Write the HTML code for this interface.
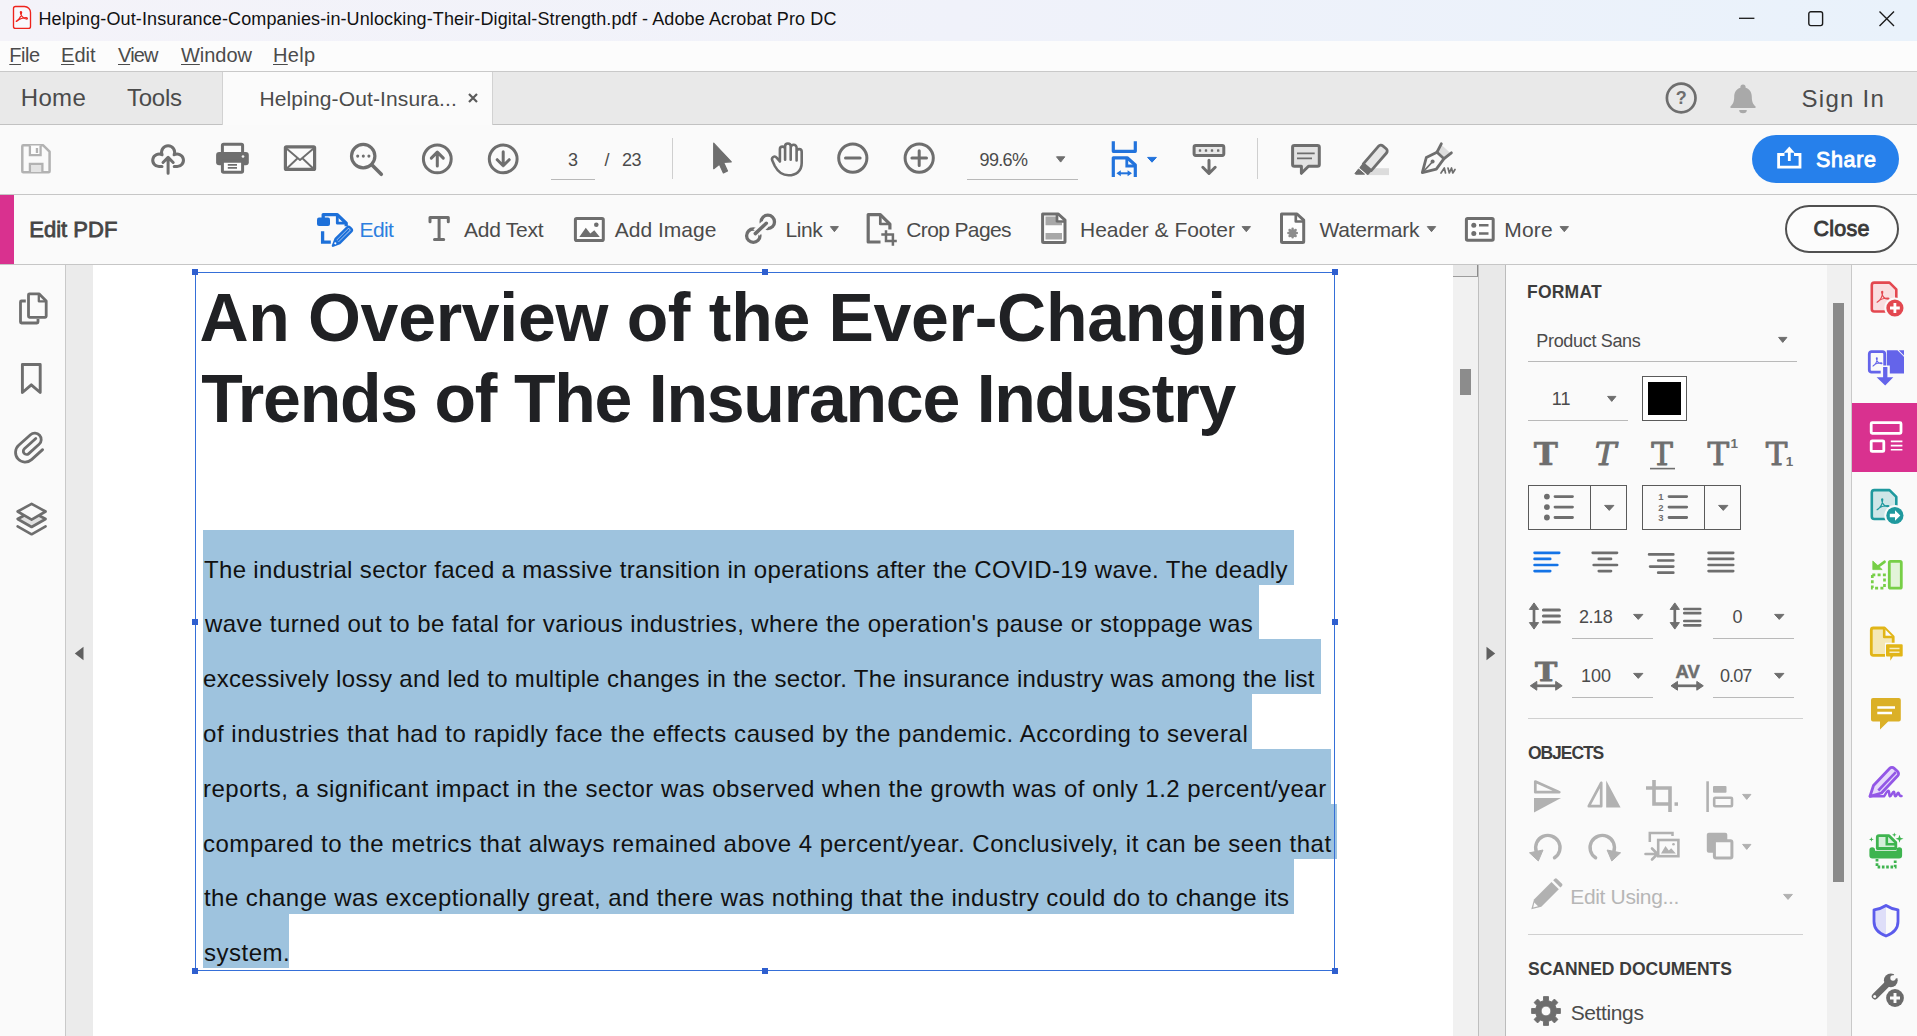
<!DOCTYPE html>
<html lang="en"><head><meta charset="utf-8"><title>Adobe Acrobat Pro DC</title>
<style>
*{box-sizing:border-box;margin:0;padding:0}
html,body{width:1917px;height:1036px;overflow:hidden;background:#fff}
body{font-family:"Liberation Sans",sans-serif;position:relative;color:#4b4b4b}
.t{position:absolute;white-space:pre;display:block}
.t u{text-decoration-thickness:1px;text-underline-offset:1.5px}
.abs,svg.i,.bar,.ln{position:absolute}
svg.i{overflow:visible}
#titlebar{left:0;top:0;width:1917px;height:41px;background:linear-gradient(90deg,#f4f3f9 0%,#f0f2fa 50%,#e9f2fb 100%)}
#menubar{left:0;top:41px;width:1917px;height:31px;background:#fcfcfc}
#tabbar{left:0;top:71px;width:1917px;height:54px;background:#e9e9e9;border-top:1px solid #c9c9c9;border-bottom:1px solid #c2c2c2}
#tab{left:222px;top:72px;width:271px;height:53px;background:#fbfbfb;border-left:1px solid #d2d2d2;border-right:1px solid #d2d2d2}
#toolbar{left:0;top:125px;width:1917px;height:70px;background:#fafafa;border-bottom:1px solid #c6c6c6}
#editbar{left:0;top:195px;width:1917px;height:70px;background:#fafafa;border-bottom:1px solid #c6c6c6}
#pink{left:0;top:195px;width:14px;height:69px;background:#d9318f}
#leftnav{left:0;top:265px;width:66px;height:771px;background:#fafafa;border-right:1px solid #c9c9c9}
#lstrip{left:66px;top:265px;width:27px;height:771px;background:#ebebeb}
#page{left:93px;top:265px;width:1360px;height:771px;background:#fff}
#vscroll{left:1453px;top:265px;width:26px;height:771px;background:#f1f1f1;border-right:1px solid #bfbfbf}
#rstrip{left:1479px;top:265px;width:26px;height:771px;background:#e9e9e9}
#rpanel{left:1505px;top:265px;width:347px;height:771px;background:#fafafa;border-left:1px solid #bcbcbc}
#rscroll{left:1827px;top:265px;width:24px;height:771px;background:#f0f0f0}
#rail{left:1851px;top:265px;width:66px;height:771px;background:#fafafa;border-left:1px solid #c9c9c9}
.hl{position:absolute;background:#9ec3de}
.hd{position:absolute;width:6px;height:6px;background:#2f5fcf}
.ul{position:absolute;height:1px;background:#b9b9b9}
.vsep{position:absolute;width:1px;background:#cfcfcf}
.box{position:absolute;border:1px solid #5a5a5a}
</style></head>
<body>
<div class="bar" id="titlebar">
<svg class="i" style="left:0px;top:0px" width="40" height="40" viewBox="0 0 40 40" ><path d="M15.500,6.500 H24.500 a6,6 0 0 1 6,6 V26.400 a2,2 0 0 1 -2,2 H15.500 a2,2 0 0 1 -2,-2 V8.500 a2,2 0 0 1 2,-2 Z" fill="#f9f8fc" stroke="#ee231c" stroke-width="1.350"/><path d="M16.800,20.800 c2.400,-1.500 4.300,-4.600 4.800,-8.300 c0.100,-1.300 -1.300,-1.300 -1.200,-0.100 c0.400,3.200 2.700,5.900 5.900,6.600 c1.400,0.200 1.400,-1.300 0.100,-1.300 c-3.300,0 -6.900,1.400 -9.300,3.400 c-0.900,0.800 -1.200,0.200 -0.300,-0.300 Z" fill="none" stroke="#ee231c" stroke-width="1.250" stroke-linejoin="round"/></svg>
<span class="t" style="left:38.50px;top:7.00px;font-size:18px;line-height:24px;color:#111;letter-spacing:0.114px;">Helping-Out-Insurance-Companies-in-Unlocking-Their-Digital-Strength.pdf - Adobe Acrobat Pro DC</span>
<svg class="i" style="left:1739px;top:10px" width="16" height="16" viewBox="0 0 16 16" ><path d="M0,8.3 H15.4" stroke="#1a1a1a" stroke-width="1.3" fill="none"/></svg><svg class="i" style="left:1808px;top:10.5px" width="16" height="16" viewBox="0 0 16 16" ><rect x="0.8" y="0.8" width="13.8" height="13.8" rx="2" fill="none" stroke="#1a1a1a" stroke-width="1.4"/></svg><svg class="i" style="left:1879px;top:10.5px" width="16" height="16" viewBox="0 0 16 16" ><path d="M0.5,0.5 L15,15 M15,0.5 L0.5,15" stroke="#1a1a1a" stroke-width="1.4" fill="none"/></svg>
</div>
<div class="bar" id="menubar"></div>
<span class="t" style="left:9.30px;top:42.00px;font-size:20px;line-height:26px;color:#4b4b4b;letter-spacing:-0.471px;"><u>F</u>ile</span>
<span class="t" style="left:61.00px;top:42.00px;font-size:20px;line-height:26px;color:#4b4b4b;letter-spacing:0.027px;"><u>E</u>dit</span>
<span class="t" style="left:118.00px;top:42.00px;font-size:20px;line-height:26px;color:#4b4b4b;letter-spacing:-0.854px;"><u>V</u>iew</span>
<span class="t" style="left:181.00px;top:42.00px;font-size:20px;line-height:26px;color:#4b4b4b;letter-spacing:-0.042px;"><u>W</u>indow</span>
<span class="t" style="left:273.00px;top:42.00px;font-size:20px;line-height:26px;color:#4b4b4b;letter-spacing:0.323px;"><u>H</u>elp</span>
<div class="bar" id="tabbar"></div><div class="bar" id="tab"></div>
<span class="t" style="left:20.80px;top:82.00px;font-size:24px;line-height:31px;color:#4b4b4b;letter-spacing:0.308px;">Home</span>
<span class="t" style="left:127.00px;top:82.00px;font-size:24px;line-height:31px;color:#4b4b4b;letter-spacing:-0.257px;">Tools</span>
<span class="t" style="left:259.50px;top:85.00px;font-size:21px;line-height:27px;color:#4b4b4b;letter-spacing:0.121px;">Helping-Out-Insura...</span>
<svg class="i" style="left:468px;top:93px" width="10" height="10" viewBox="0 0 10 10" ><path d="M1,1 L9,9 M9,1 L1,9" stroke="#5a5a5a" stroke-width="2.2" fill="none"/></svg>
<svg class="i" style="left:1665px;top:81.5px" width="32" height="32" viewBox="0 0 32 32" ><circle cx="16.2" cy="16" r="14.3" fill="none" stroke="#6e6e6e" stroke-width="2.7"/><text x="16.2" y="22.3" text-anchor="middle" font-family="Liberation Sans,sans-serif" font-weight="700" font-size="18" fill="#6e6e6e">?</text></svg><svg class="i" style="left:1729.5px;top:83.5px" width="26" height="30" viewBox="0 0 26 30" ><path d="M13,0.5 a2.6,2.6 0 0 1 2.6,2.6 v0.6 c4,1.2 6.2,4.700 6.2,9 c0,5.400 1.6,7.800 3.700,9.600 v1.700 H0.5 v-1.700 c2.1,-1.8 3.700,-4.200 3.700,-9.600 c0,-4.300 2.2,-7.800 6.200,-9 v-0.600 a2.600,2.600 0 0 1 2.600,-2.600 Z" fill="#a9a9a9"/><path d="M9.200,26 h7.600 a3.800,3.300 0 0 1 -7.600,0 Z" fill="#a9a9a9"/></svg>
<span class="t" style="left:1801.50px;top:83.00px;font-size:24px;line-height:31px;color:#4b4b4b;letter-spacing:1.269px;">Sign In</span>
<div class="bar" id="toolbar"></div>
<svg class="i" style="left:0;top:0" width="1917" height="1036" viewBox="0 0 1917 1036"><path d="M23.300,145.300 H43.200 L49.600,151.700 V171.300 a1,1 0 0 1 -1,1 H23.300 a1,1 0 0 1 -1,-1 V146.300 a1,1 0 0 1 1,-1 Z" fill="none" stroke="#b2b2b2" stroke-width="2.5" stroke-linecap="round" stroke-linejoin="round"/><path d="M29.900,145.500 V155.200 H40.600 V145.500" fill="#fdfdfd" stroke="#b2b2b2" stroke-width="2.3" stroke-linejoin="miter"/><rect x="35.8" y="148" width="2.3" height="5" rx="0" fill="#b2b2b2"/><path d="M29.900,172 V163.900 H42.400 V172" fill="#e3e3e3" stroke="#b2b2b2" stroke-width="2.3" stroke-linejoin="miter"/><path d="M162,166.600 H159.300 A6.300,6.300 0 1 1 162.100,154.800 A6.500,6.500 0 1 1 174.100,154.800 A6.300,6.300 0 1 1 176.900,166.600 H174.200" fill="none" stroke="#6e6e6e" stroke-width="3" stroke-linecap="round" stroke-linejoin="round"/><path d="M168.100,173.200 V157.600 M163,162.500 L168.100,157.400 L173.200,162.500" fill="none" stroke="#6e6e6e" stroke-width="3" stroke-linecap="round" stroke-linejoin="round"/><rect x="222.4" y="144.2" width="20.2" height="10" rx="1.2" fill="#fafafa" stroke="#6e6e6e" stroke-width="3"/><rect x="216.1" y="152" width="32.7" height="13.3" rx="3" fill="#6e6e6e"/><rect x="222.4" y="161.3" width="20.2" height="10.9" rx="1.2" fill="#fdfdfd" stroke="#6e6e6e" stroke-width="3"/><path d="M227.800,164.800 H237 M227.800,167.900 H237" fill="none" stroke="#6e6e6e" stroke-width="1.7" /><circle cx="243" cy="156.5" r="1.35" fill="#f4f4f4"/><rect x="285.4" y="146.8" width="29.2" height="22.6" rx="1" fill="none" stroke="#6e6e6e" stroke-width="3.2"/><path d="M286.800,148.800 L300,160 L313.200,148.800 M286.800,168.500 L296.800,159 M313.200,168.500 L303.200,159" fill="none" stroke="#6e6e6e" stroke-width="1.9" stroke-linecap="round" stroke-linejoin="round"/><circle cx="363.2" cy="156.1" r="11.7" fill="none" stroke="#6e6e6e" stroke-width="3.2"/><path d="M371.800,164.800 L381.300,174.300" fill="none" stroke="#6e6e6e" stroke-width="3.6" stroke-linecap="round" stroke-linejoin="round"/><circle cx="357.7" cy="156.1" r="1.55" fill="#6e6e6e"/><circle cx="363.3" cy="156.1" r="1.55" fill="#6e6e6e"/><circle cx="368.9" cy="156.1" r="1.55" fill="#6e6e6e"/><circle cx="437.3" cy="158.9" r="13.9" fill="none" stroke="#6e6e6e" stroke-width="3"/><path d="M437.3,166.1 V152.4 M431.3,158.1 L437.3,152.1 L443.3,158.1" fill="none" stroke="#6e6e6e" stroke-width="3" stroke-linecap="round" stroke-linejoin="round"/><circle cx="503.2" cy="158.9" r="13.9" fill="none" stroke="#6e6e6e" stroke-width="3"/><path d="M503.2,151.7 V165.4 M497.2,159.7 L503.2,165.7 L509.2,159.7" fill="none" stroke="#6e6e6e" stroke-width="3" stroke-linecap="round" stroke-linejoin="round"/><path d="M713.700,143.200 V168.700 L719.400,164.200 L723.400,172.900 L727.500,171 L723.500,162.300 L731.300,161.800 Z" fill="#6e6e6e" stroke="#6e6e6e" stroke-width="1.200" stroke-linejoin="round"/><path d="M779.900,161.500 V149.200 a2.600,2.600 0 0 1 5.200,0 V159.700 M785.100,159.700 V146.300 a2.800,2.800 0 0 1 5.600,0 V159.700 M790.700,159.700 V147.750 a2.950,2.950 0 0 1 5.900,0 V159.700 M796.600,160.500 V151.650 a2.550,2.550 0 0 1 5.100,0 V163 C801.700,171 796,175.300 788.500,175.300 C781,175.300 777.500,171 774.800,166 L772.300,160.500 C771,157.500 774.500,155 776.800,157.800 L779.900,161.500" fill="none" stroke="#6e6e6e" stroke-width="2.6" stroke-linecap="round" stroke-linejoin="round"/><circle cx="852.8" cy="158.1" r="14.1" fill="none" stroke="#6e6e6e" stroke-width="3"/><path d="M845.500,158.100 H860.100" fill="none" stroke="#6e6e6e" stroke-width="3" stroke-linecap="round" stroke-linejoin="round"/><circle cx="919.2" cy="158.1" r="14.1" fill="none" stroke="#6e6e6e" stroke-width="3"/><path d="M911.900,158.100 H926.500 M919.200,150.800 V165.400" fill="none" stroke="#6e6e6e" stroke-width="3" stroke-linecap="round" stroke-linejoin="round"/><path d="M1056.5,156.8 H1064.8 L1060.65,162.1 Z" fill="#6e6e6e" stroke="#6e6e6e" stroke-width="1" stroke-linejoin="round"/><path d="M1113.300,141.200 V151.300 H1135.300 V141.200" fill="none" stroke="#2273dc" stroke-width="3.2" stroke-linejoin="round"/><path d="M1113.300,177 V157.800 H1127.200 L1135.300,165 V177" fill="none" stroke="#2273dc" stroke-width="3.2" stroke-linejoin="round"/><path d="M1126.800,158.500 V166 H1134.800" fill="none" stroke="#2273dc" stroke-width="2.8" /><path d="M1119.500,173.300 H1129" fill="none" stroke="#2273dc" stroke-width="2" /><path d="M1116.400,173.300 L1120.800,170.300 V176.300 Z M1132,173.300 L1127.600,170.300 V176.300 Z" fill="#2273dc"/><path d="M1147.6,157.4 H1156.4 L1152,162.2 Z" fill="#2273dc" stroke="#2273dc" stroke-width="1" stroke-linejoin="round"/><rect x="1194.1" y="145.6" width="29.7" height="9.8" rx="1.6" fill="#e9e9e9" stroke="#6e6e6e" stroke-width="3"/><rect x="1198.8" y="149.3" width="2.4" height="2.5" rx="0.6" fill="#6e6e6e"/><rect x="1204.8" y="149.3" width="2.4" height="2.5" rx="0.6" fill="#6e6e6e"/><rect x="1210.8" y="149.3" width="2.4" height="2.5" rx="0.6" fill="#6e6e6e"/><rect x="1217" y="149.3" width="2.4" height="2.5" rx="0.6" fill="#6e6e6e"/><path d="M1209,160.300 V173 M1202.800,167.300 L1209,173.500 L1215.200,167.300" fill="none" stroke="#6e6e6e" stroke-width="3" stroke-linecap="round" stroke-linejoin="round"/><path d="M1294.400,145.400 H1317.500 a1.800,1.800 0 0 1 1.800,1.800 V164.400 a1.800,1.800 0 0 1 -1.800,1.800 H1308.500 L1301.400,173.300 V166.200 H1294.400 a1.800,1.800 0 0 1 -1.800,-1.800 V147.200 a1.800,1.800 0 0 1 1.800,-1.800 Z" fill="#e3e3e3" stroke="#6e6e6e" stroke-width="3" stroke-linecap="round" stroke-linejoin="round"/><path d="M1297,153.300 H1314.700 M1297,158.300 H1312" fill="none" stroke="#6e6e6e" stroke-width="1.7" /><rect x="1366.2" y="168.2" width="22.8" height="6.9" rx="0" fill="#dcdcdc"/><path d="M1363.300,163.800 L1378.600,146.200 a3,3 0 0 1 4.200,-0.300 L1386.200,148.800 a3,3 0 0 1 0.300,4.200 L1371.200,170.600 Z" fill="#e6e6e6" stroke="#6e6e6e" stroke-width="2.8" stroke-linecap="round" stroke-linejoin="round"/><path d="M1363.300,163.800 L1371.200,170.600 L1367.800,174.300 L1360.200,167.700 Z" fill="#6e6e6e" stroke="#6e6e6e" stroke-width="1.500" stroke-linejoin="round"/><path d="M1358.500,169 L1364.500,174.200 H1355.800 a0.700,0.700 0 0 1 -0.500,-1.200 Z" fill="#6e6e6e" stroke="#6e6e6e" stroke-width="1" stroke-linejoin="round"/><path d="M1441.500,145 L1451,153.500 L1446,159 L1437.500,151.500 Z" fill="#dddddd"/><path d="M1441.300,143.800 L1437,152.200 M1451.400,152.800 L1444,158.700" fill="none" stroke="#6e6e6e" stroke-width="2.8" stroke-linecap="round" stroke-linejoin="round"/><path d="M1437,152.200 L1426.300,157.500 L1422.300,172.600 L1436.300,169.200 L1444,158.700 Z" fill="none" stroke="#6e6e6e" stroke-width="2.8" stroke-linecap="round" stroke-linejoin="round"/><path d="M1423,172 L1431.800,162.500" fill="none" stroke="#6e6e6e" stroke-width="1.8" stroke-linecap="round" stroke-linejoin="round"/><circle cx="1432.6" cy="161.6" r="2" fill="#6e6e6e"/><path d="M1441,173 L1444.300,168 L1445.500,173 M1448,168 L1449.300,173 L1451.500,168 L1452.800,173 L1455,169.500" fill="none" stroke="#6e6e6e" stroke-width="1.7" stroke-linecap="round" stroke-linejoin="round"/></svg>
<span class="t" style="left:568.00px;top:148.00px;font-size:18px;line-height:24px;color:#4b4b4b;">3</span>
<div class="ul" style="left:551px;top:179px;width:44px"></div>
<span class="t" style="left:604.50px;top:148.00px;font-size:18px;line-height:24px;color:#4b4b4b;">/</span>
<span class="t" style="left:622.00px;top:148.00px;font-size:18px;line-height:24px;color:#4b4b4b;letter-spacing:-0.511px;">23</span>
<div class="vsep" style="left:672px;top:138px;height:41px"></div>
<span class="t" style="left:979.50px;top:148.00px;font-size:18px;line-height:24px;color:#4b4b4b;letter-spacing:-0.635px;">99.6%</span>
<div class="ul" style="left:967px;top:179px;width:111px"></div>
<div class="vsep" style="left:1257px;top:138px;height:41px"></div>
<div class="abs" style="left:1752px;top:135px;width:147px;height:48px;border-radius:24px;background:#2680eb"></div>
<svg class="i" style="left:1777px;top:145.5px" width="25" height="23" viewBox="0 0 25 23" ><path d="M7.500,8.500 H1.600 V21.200 H23 V8.500 H17" fill="none" stroke="#fff" stroke-width="2.800"/><path d="M12.300,15 V3" fill="none" stroke="#fff" stroke-width="2.800"/><path d="M6.800,6.800 L12.300,0.600 L17.800,6.800 Z" fill="#fff"/></svg>
<span class="t" style="left:1816.00px;top:146.00px;font-size:21.5px;line-height:28px;color:#fff;letter-spacing:0.643px;-webkit-text-stroke:0.9px #fff;">Share</span>
<div class="bar" id="editbar"></div><div class="bar" id="pink"></div>
<span class="t" style="left:29.20px;top:215.00px;font-size:22px;line-height:29px;color:#454545;letter-spacing:0.030px;-webkit-text-stroke:0.8px #454545;">Edit PDF</span>
<svg class="i" style="left:0;top:0" width="1917" height="1036" viewBox="0 0 1917 1036"><path d="M323.200,218 V214.600 H337.300 L346.200,223.200 V226.300" fill="none" stroke="#1d70d9" stroke-width="3.3" stroke-linejoin="round"/><path d="M337.300,214.800 V223.200 H346" fill="none" stroke="#1d70d9" stroke-width="2.8" stroke-linejoin="round"/><rect x="317" y="217.5" width="13" height="8.5" rx="2" fill="#1d70d9"/><path d="M322.600,231.300 V242.100 H330.800" fill="none" stroke="#1d70d9" stroke-width="3.3" /><path d="M335.600,239 L347.300,227.300 a1.800,1.800 0 0 1 2.500,0 L351.300,228.800 a1.800,1.800 0 0 1 0,2.500 L339.600,243 L333,245.700 Z" fill="#eef1fb" stroke="#1d70d9" stroke-width="2.5" stroke-linejoin="round"/><path d="M337.600,241 L349.300,229.300" fill="none" stroke="#1d70d9" stroke-width="2.3" /><path d="M335.600,239 L339.600,243 L332.800,245.900 Z" fill="#1d70d9"/><circle cx="335.3" cy="243.3" r="1.1" fill="#fff"/><path d="M430,221.800 V217.400 H448.300 V221.800 M439.100,217.400 V239.600 M434.500,239.600 H443.700" fill="none" stroke="#6e6e6e" stroke-width="3" stroke-linecap="round" stroke-linejoin="round"/><rect x="575.4" y="218.5" width="27.9" height="22" rx="1.3" fill="#fdfdfd" stroke="#6e6e6e" stroke-width="3"/><path d="M579.300,237 L585.800,227.800 L590.300,233.600 L594.300,230.300 L599.800,237 Z" fill="#6e6e6e"/><circle cx="596.3" cy="224.7" r="2.3" fill="#6e6e6e"/><circle cx="767.8" cy="221.9" r="6.7" fill="none" stroke="#6e6e6e" stroke-width="3.3"/><circle cx="753.3" cy="235.7" r="6.7" fill="none" stroke="#6e6e6e" stroke-width="3.3"/><path d="M756.300,232.700 L765.300,224.200" fill="none" stroke="#fafafa" stroke-width="8.5" stroke-linecap="butt"/><path d="M755.300,233.600 L766.300,223.300" fill="none" stroke="#6e6e6e" stroke-width="3.5" stroke-linecap="round"/><path d="M830.4,226.6 H838.4 L834.4,231.7 Z" fill="#6e6e6e" stroke="#6e6e6e" stroke-width="1" stroke-linejoin="round"/><path d="M880.500,242 H868.200 V214.600 H880.300 L889.900,224.200 V229.500" fill="none" stroke="#6e6e6e" stroke-width="3.2" stroke-linejoin="round"/><path d="M880.300,214.900 V224 H889.600" fill="none" stroke="#6e6e6e" stroke-width="2.7" stroke-linejoin="round"/><path d="M886,230.300 V241 H896.800 M881.300,234.600 H892.900 V245.800" fill="none" stroke="#6e6e6e" stroke-width="2.5" /><path d="M1042.600,214 H1058.300 L1065,220.200 V241.400 a1,1 0 0 1 -1,1 H1043.600 a1,1 0 0 1 -1,-1 Z" fill="#fdfdfd" stroke="#6e6e6e" stroke-width="3" stroke-linejoin="round"/><path d="M1045.500,216.600 H1056 V222.500 H1062 V225.300 H1045.500 Z M1045.500,233 H1062 V239.500 H1045.500 Z" fill="#a8a8a8"/><path d="M1057,214.500 V221.500 H1064.500" fill="none" stroke="#6e6e6e" stroke-width="2.7" stroke-linejoin="round"/><path d="M1242.1,226.6 H1250.5 L1246.3,231.7 Z" fill="#6e6e6e" stroke="#6e6e6e" stroke-width="1" stroke-linejoin="round"/><path d="M1281.500,214 H1297 L1303.700,220.200 V241.400 a1,1 0 0 1 -1,1 H1282.500 a1,1 0 0 1 -1,-1 Z" fill="#fdfdfd" stroke="#6e6e6e" stroke-width="3" stroke-linejoin="round"/><path d="M1295.800,214.500 V221.500 H1303.300" fill="none" stroke="#6e6e6e" stroke-width="2.7" stroke-linejoin="round"/><path d="M1292.600,228.800 V237.200 M1288.400,233 H1296.800 M1289.600,230 L1295.600,236 M1295.600,230 L1289.600,236" fill="none" stroke="#8c8c8c" stroke-width="2.5" stroke-linecap="round" stroke-linejoin="round"/><path d="M1427.3,226.6 H1435.7 L1431.5,231.7 Z" fill="#6e6e6e" stroke="#6e6e6e" stroke-width="1" stroke-linejoin="round"/><rect x="1466.4" y="218.4" width="26.8" height="21.9" rx="1.2" fill="#fdfdfd" stroke="#6e6e6e" stroke-width="3"/><circle cx="1473.8" cy="225.3" r="2.5" fill="#6e6e6e"/><circle cx="1473.8" cy="233.5" r="2.5" fill="#6e6e6e"/><path d="M1479,225.300 H1488.500 M1479,233.500 H1488.500" fill="none" stroke="#6e6e6e" stroke-width="2.5" /><path d="M1560.1,226.6 H1568.5 L1564.3,231.7 Z" fill="#6e6e6e" stroke="#6e6e6e" stroke-width="1" stroke-linejoin="round"/></svg>
<span class="t" style="left:359.50px;top:216.00px;font-size:21px;line-height:27px;color:#2d7fdf;letter-spacing:-0.618px;">Edit</span>
<span class="t" style="left:464.00px;top:216.00px;font-size:21px;line-height:27px;color:#4b4b4b;letter-spacing:-0.244px;">Add Text</span>
<span class="t" style="left:614.80px;top:216.00px;font-size:21px;line-height:27px;color:#4b4b4b;">Add Image</span>
<span class="t" style="left:785.60px;top:216.00px;font-size:21px;line-height:27px;color:#4b4b4b;letter-spacing:-0.474px;">Link</span>
<span class="t" style="left:906.30px;top:216.00px;font-size:21px;line-height:27px;color:#4b4b4b;letter-spacing:-0.634px;">Crop Pages</span>
<span class="t" style="left:1080.00px;top:216.00px;font-size:21px;line-height:27px;color:#4b4b4b;letter-spacing:-0.018px;">Header &amp; Footer</span>
<span class="t" style="left:1319.50px;top:216.00px;font-size:21px;line-height:27px;color:#4b4b4b;letter-spacing:-0.237px;">Watermark</span>
<span class="t" style="left:1504.20px;top:216.00px;font-size:21px;line-height:27px;color:#4b4b4b;letter-spacing:0.207px;">More</span>
<div class="abs" style="left:1785px;top:205px;width:114px;height:48px;border-radius:24px;border:2px solid #505050;background:#fcfcfc"></div>
<span class="t" style="left:1813.50px;top:215.00px;font-size:21.5px;line-height:28px;color:#3a3a3a;letter-spacing:0.244px;-webkit-text-stroke:0.9px #3a3a3a;">Close</span>
<div class="bar" id="leftnav"></div><div class="bar" id="lstrip"></div>
<svg class="i" style="left:0;top:0" width="1917" height="1036" viewBox="0 0 1917 1036"><path d="M25.800,301 H21.500 a1,1 0 0 0 -1,1 V322 a1,1 0 0 0 1,1 H37 a1,1 0 0 0 1,-1 V319" fill="none" stroke="#6e6e6e" stroke-width="2.8" stroke-linejoin="round"/><path d="M29.500,293.800 H39 L46.200,301 V316.300 a1,1 0 0 1 -1,1 H29.500 a1,1 0 0 1 -1,-1 V294.800 a1,1 0 0 1 1,-1 Z" fill="#fafafa" stroke="#6e6e6e" stroke-width="2.8" stroke-linejoin="round"/><path d="M38.800,294.300 V301.300 H45.800" fill="none" stroke="#6e6e6e" stroke-width="2.3" stroke-linejoin="round"/><path d="M22.400,364.500 H40.200 V392.500 L31.300,384.800 L22.400,392.500 Z" fill="none" stroke="#6e6e6e" stroke-width="2.9" stroke-linejoin="round"/><g transform="translate(31.200 447) rotate(-42) scale(0.96)"><path d="M9.500,-3.400 H-6.500 a3.400,3.400 0 0 0 0,6.800 H8 a6.700,6.700 0 0 0 0,-13.400 H-8.500 a10,10 0 0 0 0,20 H7" fill="none" stroke="#6e6e6e" stroke-width="2.9" stroke-linecap="round" stroke-linejoin="round"/></g><path d="M17.600,526.300 L31.600,534.300 L45.600,526.300" fill="none" stroke="#6e6e6e" stroke-width="2.6" stroke-linejoin="round" stroke-linecap="round"/><path d="M17.600,519 L31.600,527 L45.600,519 L31.600,511.500 Z" fill="#e1e1e1" stroke="#6e6e6e" stroke-width="2.6" stroke-linejoin="round" stroke-linecap="round"/><path d="M31.600,503.800 L45.600,511.500 L31.600,519.600 L17.600,511.500 Z" fill="#fafafa" stroke="#6e6e6e" stroke-width="2.6" stroke-linejoin="round"/></svg>
<div class="bar" id="page"></div>
<div class="hl" style="left:202.8px;top:529.8px;width:1091.2px;height:55.0px"></div>
<div class="hl" style="left:202.8px;top:584.6px;width:1056.2px;height:55.0px"></div>
<div class="hl" style="left:202.8px;top:639.4px;width:1118.2px;height:55.0px"></div>
<div class="hl" style="left:202.8px;top:694.2px;width:1049.7px;height:55.0px"></div>
<div class="hl" style="left:202.8px;top:749.0px;width:1128.7px;height:55.0px"></div>
<div class="hl" style="left:202.8px;top:803.8px;width:1134.2px;height:55.0px"></div>
<div class="hl" style="left:202.8px;top:858.6px;width:1091.2px;height:55.0px"></div>
<div class="hl" style="left:202.8px;top:913.4px;width:86.2px;height:54.8px"></div>
<span class="t" style="left:199.40px;top:277.00px;font-size:68px;line-height:80px;color:#202124;font-weight:700;letter-spacing:-0.300px;">An Overview of the Ever-Changing</span>
<span class="t" style="left:201.30px;top:358.00px;font-size:68px;line-height:80px;color:#202124;font-weight:700;letter-spacing:-1.229px;">Trends of The Insurance Industry</span>
<span class="t" style="left:204.00px;top:554.00px;font-size:24px;line-height:31px;color:#111;letter-spacing:0.337px;">The industrial sector faced a massive transition in operations after the COVID-19 wave. The deadly</span>
<span class="t" style="left:205.00px;top:608.00px;font-size:24px;line-height:31px;color:#111;letter-spacing:0.424px;">wave turned out to be fatal for various industries, where the operation's pause or stoppage was</span>
<span class="t" style="left:203.00px;top:663.00px;font-size:24px;line-height:31px;color:#111;letter-spacing:0.311px;">excessively lossy and led to multiple changes in the sector. The insurance industry was among the list</span>
<span class="t" style="left:203.00px;top:718.00px;font-size:24px;line-height:31px;color:#111;letter-spacing:0.560px;">of industries that had to rapidly face the effects caused by the pandemic. According to several</span>
<span class="t" style="left:203.00px;top:773.00px;font-size:24px;line-height:31px;color:#111;letter-spacing:0.493px;">reports, a significant impact in the sector was observed when the growth was of only 1.2 percent/year</span>
<span class="t" style="left:203.00px;top:828.00px;font-size:24px;line-height:31px;color:#111;letter-spacing:0.512px;">compared to the metrics that always remained above 4 percent/year. Conclusively, it can be seen that</span>
<span class="t" style="left:204.00px;top:882.00px;font-size:24px;line-height:31px;color:#111;letter-spacing:0.444px;">the change was exceptionally great, and there was nothing that the industry could do to change its</span>
<span class="t" style="left:204.00px;top:937.00px;font-size:24px;line-height:31px;color:#111;letter-spacing:0.497px;">system.</span>
<div class="abs" style="left:195px;top:272px;width:1140px;height:699px;border:1px solid #356fd8"></div>
<div class="hd" style="left:192.0px;top:269.0px"></div>
<div class="hd" style="left:762.0px;top:269.0px"></div>
<div class="hd" style="left:1332.0px;top:269.0px"></div>
<div class="hd" style="left:192.0px;top:618.5px"></div>
<div class="hd" style="left:1332.0px;top:618.5px"></div>
<div class="hd" style="left:192.0px;top:968.0px"></div>
<div class="hd" style="left:762.0px;top:968.0px"></div>
<div class="hd" style="left:1332.0px;top:968.0px"></div>
<div class="bar" id="vscroll"></div>
<div class="abs" style="left:1453px;top:265px;width:25px;height:12px;background:#e8e8e8;border-bottom:1px solid #9c9c9c;border-right:1px solid #8c8c8c"></div>
<div class="abs" style="left:1460px;top:368.5px;width:11px;height:26.5px;background:#8c8c8c"></div>
<div class="bar" id="rstrip"></div>
<svg class="i" style="left:74px;top:645.5px" width="10" height="15" viewBox="0 0 10 15" ><path d="M9.500,0.800 V14.200 L0.800,7.500 Z" fill="#5f5f5f"/></svg><svg class="i" style="left:1486px;top:645.5px" width="10" height="15" viewBox="0 0 10 15" ><path d="M0.500,0.800 V14.200 L9.200,7.500 Z" fill="#5f5f5f"/></svg>
<div class="bar" id="rpanel"></div>
<span class="t" style="left:1527.00px;top:280.00px;font-size:17.5px;line-height:24px;color:#3c3c3c;font-weight:700;letter-spacing:0.227px;">FORMAT</span>
<span class="t" style="left:1536.30px;top:329.00px;font-size:18px;line-height:24px;color:#4b4b4b;letter-spacing:-0.324px;">Product Sans</span>
<div class="ul" style="left:1528px;top:361px;width:269px"></div>
<span class="t" style="left:1551.80px;top:387.00px;font-size:18px;line-height:24px;color:#4b4b4b;letter-spacing:0.014px;">11</span>
<div class="ul" style="left:1528px;top:420px;width:100px"></div>
<div class="box" style="left:1642px;top:376px;width:45px;height:45px;background:#fff"></div>
<div class="abs" style="left:1648px;top:382px;width:33px;height:33px;background:#000"></div>
<div class="box" style="left:1528px;top:485px;width:99px;height:45px"></div><div class="vsep" style="left:1590px;top:485px;height:45px;background:#5a5a5a"></div>
<div class="box" style="left:1642px;top:485px;width:99px;height:45px"></div><div class="vsep" style="left:1704px;top:485px;height:45px;background:#5a5a5a"></div>
<span class="t" style="left:1579.00px;top:605.00px;font-size:18px;line-height:24px;color:#4b4b4b;letter-spacing:-0.444px;">2.18</span>
<div class="ul" style="left:1572px;top:638px;width:81px"></div>
<span class="t" style="left:1732.40px;top:605.00px;font-size:18px;line-height:24px;color:#4b4b4b;">0</span>
<div class="ul" style="left:1712.5px;top:638px;width:81px"></div>
<span class="t" style="left:1581.00px;top:664.00px;font-size:18px;line-height:24px;color:#4b4b4b;letter-spacing:-0.011px;">100</span>
<div class="ul" style="left:1572px;top:697px;width:81px"></div>
<span class="t" style="left:1720.00px;top:664.00px;font-size:18px;line-height:24px;color:#4b4b4b;letter-spacing:-0.910px;">0.07</span>
<div class="ul" style="left:1712.5px;top:697px;width:81px"></div>
<div class="ul" style="left:1528px;top:718px;width:275px;background:#d0d0d0"></div>
<span class="t" style="left:1528.00px;top:741.00px;font-size:17.5px;line-height:24px;color:#3c3c3c;font-weight:700;letter-spacing:-1.065px;">OBJECTS</span>
<span class="t" style="left:1570.30px;top:883.00px;font-size:21px;line-height:27px;color:#b6b6b6;letter-spacing:-0.349px;">Edit Using...</span>
<div class="ul" style="left:1528px;top:934px;width:275px;background:#d0d0d0"></div>
<span class="t" style="left:1528.00px;top:957.00px;font-size:17.5px;line-height:24px;color:#3c3c3c;font-weight:700;letter-spacing:-0.013px;">SCANNED DOCUMENTS</span>
<span class="t" style="left:1570.70px;top:999.00px;font-size:21px;line-height:27px;color:#4b4b4b;letter-spacing:-0.384px;">Settings</span>
<svg class="i" style="left:0;top:0" width="1917" height="1036" viewBox="0 0 1917 1036"><text x="1545.9" y="464.5" font-family="DejaVu Serif,Liberation Serif,serif" font-size="32.5" font-weight="700" fill="#6e6e6e" text-anchor="middle" stroke="#6e6e6e" stroke-width="0.5" stroke-linejoin="round">T</text><text x="1605.5" y="464.5" font-family="DejaVu Serif,Liberation Serif,serif" font-size="32.5" font-weight="400" fill="#6e6e6e" text-anchor="middle" font-style="italic" stroke="#6e6e6e" stroke-width="0.9" stroke-linejoin="round">T</text><text x="1662" y="464.5" font-family="DejaVu Serif,Liberation Serif,serif" font-size="32.5" font-weight="400" fill="#6e6e6e" text-anchor="middle" stroke="#6e6e6e" stroke-width="0.9" stroke-linejoin="round">T</text><path d="M1650,468.600 H1675" stroke="#6e6e6e" stroke-width="1.600"/><text x="1718.3" y="464.5" font-family="DejaVu Serif,Liberation Serif,serif" font-size="32.5" font-weight="400" fill="#6e6e6e" text-anchor="middle" stroke="#6e6e6e" stroke-width="0.9" stroke-linejoin="round">T</text><text x="1734.2" y="448.3" font-family="Liberation Sans,sans-serif" font-size="13.5" font-weight="700" fill="#6e6e6e" text-anchor="middle">1</text><text x="1776.7" y="464.5" font-family="DejaVu Serif,Liberation Serif,serif" font-size="32.5" font-weight="400" fill="#6e6e6e" text-anchor="middle" stroke="#6e6e6e" stroke-width="0.9" stroke-linejoin="round">T</text><text x="1789.4" y="466.3" font-family="Liberation Sans,sans-serif" font-size="13.5" font-weight="700" fill="#6e6e6e" text-anchor="middle">1</text><circle cx="1546.900" cy="496.600" r="2.900" fill="#6e6e6e"/><circle cx="1546.900" cy="507.100" r="2.900" fill="#6e6e6e"/><circle cx="1546.900" cy="517.500" r="2.900" fill="#6e6e6e"/><path d="M1555,496.6 H1572.5 M1555,507.1 H1572.5 M1555,517.5 H1572.5" stroke="#6e6e6e" stroke-width="2.8" stroke-linecap="round" fill="none"/><text x="1660.8" y="500.2" font-family="Liberation Sans,sans-serif" font-size="9.5" font-weight="700" fill="#6e6e6e" text-anchor="middle">1</text><text x="1660.8" y="510.7" font-family="Liberation Sans,sans-serif" font-size="9.5" font-weight="700" fill="#6e6e6e" text-anchor="middle">2</text><text x="1660.8" y="521.1" font-family="Liberation Sans,sans-serif" font-size="9.5" font-weight="700" fill="#6e6e6e" text-anchor="middle">3</text><path d="M1669,496.6 H1686.7 M1669,507.1 H1686.7 M1669,517.5 H1686.7" stroke="#6e6e6e" stroke-width="2.8" stroke-linecap="round" fill="none"/><path d="M1534.6,552.8 H1559.2 M1534.6,558.9 H1550.2 M1534.6,565 H1557.3 M1534.6,571.1 H1550.2" stroke="#1473e6" stroke-width="2.7" stroke-linecap="round" fill="none"/><path d="M1592.7,552.8 H1617 M1598.8,558.9 H1611 M1593.7,565 H1617 M1598.8,571.1 H1611" stroke="#6e6e6e" stroke-width="2.7" stroke-linecap="round" fill="none"/><path d="M1649.1,554.4 H1673.3 M1658.2,560.5 H1673.3 M1650.1,566.6 H1673.3 M1658.2,572.7 H1673.3" stroke="#6e6e6e" stroke-width="2.7" stroke-linecap="round" fill="none"/><path d="M1708.6,552.8 H1733.2 M1708.6,558.9 H1733.2 M1708.6,565 H1733.2 M1708.6,571.1 H1733.2" stroke="#6e6e6e" stroke-width="2.7" stroke-linecap="round" fill="none"/><path d="M1534,606.4 V625.6" stroke="#6e6e6e" stroke-width="2.700" fill="none"/><path d="M1534,602.9 L1538.6,609.4 H1529.4 Z M1534,629.1 L1538.6,622.6 H1529.4 Z" fill="#6e6e6e" stroke="#6e6e6e" stroke-width="1" stroke-linejoin="round"/><path d="M1543.4,610 H1559.4 M1543.4,616 H1559.4 M1543.4,622 H1559.4" stroke="#6e6e6e" stroke-width="3" stroke-linecap="round" fill="none"/><path d="M1674.8,606.4 V625.6" stroke="#6e6e6e" stroke-width="2.700" fill="none"/><path d="M1674.8,602.9 L1679.4,609.4 H1670.2 Z M1674.8,629.1 L1679.4,622.6 H1670.2 Z" fill="#6e6e6e" stroke="#6e6e6e" stroke-width="1" stroke-linejoin="round"/><path d="M1684.3,609 H1700.2 M1684.3,613.2 H1700.2 M1684.3,621 H1700.2 M1684.3,625.3 H1700.2" stroke="#6e6e6e" stroke-width="2.7" stroke-linecap="round" fill="none"/><text x="0" y="0" font-family="DejaVu Serif,Liberation Serif,serif" font-size="26" font-weight="700" fill="#6e6e6e" text-anchor="middle" stroke="#6e6e6e" stroke-width="0.9" stroke-linejoin="round" transform="translate(1546.2 680.8) scale(1.15 1)">T</text><path d="M1533.8,685.8 H1558.7" stroke="#6e6e6e" stroke-width="2.700" fill="none"/><path d="M1530.3,685.8 L1536.8,681.4 V690.2 Z M1562.2,685.8 L1555.7,681.4 V690.2 Z" fill="#6e6e6e" stroke="#6e6e6e" stroke-width="1" stroke-linejoin="round"/><text x="1687.7" y="677.7" font-family="Liberation Sans,sans-serif" font-size="18.5" font-weight="700" fill="#6e6e6e" text-anchor="middle" stroke="#6e6e6e" stroke-width="0.5" stroke-linejoin="round">AV</text><path d="M1674.5,685.8 H1699.8" stroke="#6e6e6e" stroke-width="2.700" fill="none"/><path d="M1671,685.8 L1677.5,681.4 V690.2 Z M1703.3,685.8 L1696.8,681.4 V690.2 Z" fill="#6e6e6e" stroke="#6e6e6e" stroke-width="1" stroke-linejoin="round"/><path d="M1535.300,781.500 L1559.300,792.200 H1535.300 Z" fill="none" stroke="#b1b1b1" stroke-width="2.700" stroke-linejoin="round"/><path d="M1534,798 H1561 L1534,812.500 Z" fill="#b1b1b1"/><path d="M1601.200,782.800 V806.200 H1588.800 Z" fill="none" stroke="#b1b1b1" stroke-width="2.700" stroke-linejoin="round"/><path d="M1606.200,780.600 L1620.600,807.500 H1606.200 Z" fill="#b1b1b1"/><path d="M1654,780 V804 H1671 M1646,788 H1670 V812" fill="none" stroke="#b1b1b1" stroke-width="3.600"/><rect x="1674.500" y="802.300" width="3.500" height="3.500" fill="#b1b1b1"/><path d="M1707.600,781.300 V812" stroke="#b1b1b1" stroke-width="2.600"/><rect x="1713" y="786" width="13.500" height="6.800" rx="1" fill="#b1b1b1"/><rect x="1714.200" y="797.800" width="17.800" height="8.500" rx="1" fill="none" stroke="#b1b1b1" stroke-width="2.600"/><path d="M1554.500,857.800 A12.200,12.200 0 1 0 1536.300,851.500" fill="none" stroke="#b1b1b1" stroke-width="3.400" stroke-linecap="round"/><path d="M1529.500,852.800 L1543,850 L1538.300,861 Z" fill="#b1b1b1" stroke="#b1b1b1" stroke-width="1" stroke-linejoin="round"/><path d="M1595.600,857.800 A12.200,12.200 0 1 1 1613.800,851.500" fill="none" stroke="#b1b1b1" stroke-width="3.400" stroke-linecap="round"/><path d="M1620.600,852.800 L1607.100,850 L1611.800,861 Z" fill="#b1b1b1" stroke="#b1b1b1" stroke-width="1" stroke-linejoin="round"/><path d="M1649.800,842 V833 H1672.500 V836" fill="none" stroke="#b1b1b1" stroke-width="2.500"/><rect x="1658.200" y="840" width="20.200" height="16.200" fill="#fafafa" stroke="#b1b1b1" stroke-width="2.600"/><path d="M1661,853.500 L1665.500,846 L1668.800,850.500 L1671.200,848.200 L1675.800,853.500 Z" fill="#b1b1b1"/><circle cx="1673.500" cy="844.300" r="1.300" fill="#b1b1b1"/><path d="M1645.500,854 H1656 M1652,848.500 L1657.500,854 L1652,859.500" fill="none" stroke="#b1b1b1" stroke-width="2.600" stroke-linejoin="round" stroke-linecap="round"/><rect x="1706.800" y="832.800" width="20.500" height="20" rx="2" fill="#b1b1b1"/><rect x="1714.400" y="840.700" width="17.500" height="17.200" rx="1.500" fill="#fafafa" stroke="#b1b1b1" stroke-width="3"/><path d="M1531.300,909.200 L1534,899.500 L1551.500,882 L1558.800,889.300 L1541.300,906.800 Z" fill="#b1b1b1"/><path d="M1553.200,880.300 L1554.800,878.700 a1.500,1.500 0 0 1 2.100,0 L1562,883.800 a1.500,1.500 0 0 1 0,2.100 L1560.400,887.500 Z" fill="#b1b1b1"/><path d="M1534.300,902.500 L1538,906.200 L1533.200,907.500 Z" fill="#fafafa"/></svg><svg class="i" style="left:1778.45px;top:337.3px" width="9.5" height="6" viewBox="0 0 9.5 6" ><path d="M0.6,0.4 H8.9 L4.75,5.4 Z" fill="#6e6e6e" stroke="#6e6e6e" stroke-width="1" stroke-linejoin="round"/></svg><svg class="i" style="left:1607.25px;top:396.2px" width="9.5" height="6" viewBox="0 0 9.5 6" ><path d="M0.6,0.4 H8.9 L4.75,5.4 Z" fill="#6e6e6e" stroke="#6e6e6e" stroke-width="1" stroke-linejoin="round"/></svg><svg class="i" style="left:1603.75px;top:505px" width="10.5" height="6" viewBox="0 0 10.5 6" ><path d="M0.6,0.4 H9.9 L5.25,5.4 Z" fill="#6e6e6e" stroke="#6e6e6e" stroke-width="1" stroke-linejoin="round"/></svg><svg class="i" style="left:1717.75px;top:505px" width="10.5" height="6" viewBox="0 0 10.5 6" ><path d="M0.6,0.4 H9.9 L5.25,5.4 Z" fill="#6e6e6e" stroke="#6e6e6e" stroke-width="1" stroke-linejoin="round"/></svg><svg class="i" style="left:1632.75px;top:613.9px" width="10.5" height="6" viewBox="0 0 10.5 6" ><path d="M0.6,0.4 H9.9 L5.25,5.4 Z" fill="#6e6e6e" stroke="#6e6e6e" stroke-width="1" stroke-linejoin="round"/></svg><svg class="i" style="left:1774.15px;top:613.9px" width="10.5" height="6" viewBox="0 0 10.5 6" ><path d="M0.6,0.4 H9.9 L5.25,5.4 Z" fill="#6e6e6e" stroke="#6e6e6e" stroke-width="1" stroke-linejoin="round"/></svg><svg class="i" style="left:1632.75px;top:672.9px" width="10.5" height="6" viewBox="0 0 10.5 6" ><path d="M0.6,0.4 H9.9 L5.25,5.4 Z" fill="#6e6e6e" stroke="#6e6e6e" stroke-width="1" stroke-linejoin="round"/></svg><svg class="i" style="left:1774.15px;top:672.9px" width="10.5" height="6" viewBox="0 0 10.5 6" ><path d="M0.6,0.4 H9.9 L5.25,5.4 Z" fill="#6e6e6e" stroke="#6e6e6e" stroke-width="1" stroke-linejoin="round"/></svg><svg class="i" style="left:1742.25px;top:794px" width="9.5" height="6" viewBox="0 0 9.5 6" ><path d="M0.6,0.4 H8.9 L4.75,5.4 Z" fill="#b1b1b1" stroke="#b1b1b1" stroke-width="1" stroke-linejoin="round"/></svg><svg class="i" style="left:1742.25px;top:844px" width="9.5" height="6" viewBox="0 0 9.5 6" ><path d="M0.6,0.4 H8.9 L4.75,5.4 Z" fill="#b1b1b1" stroke="#b1b1b1" stroke-width="1" stroke-linejoin="round"/></svg><svg class="i" style="left:1783.1px;top:893.8px" width="10" height="6" viewBox="0 0 10 6" ><path d="M0.6,0.4 H9.4 L5,5.4 Z" fill="#b1b1b1" stroke="#b1b1b1" stroke-width="1" stroke-linejoin="round"/></svg><svg class="i" style="left:0;top:0" width="1917" height="1036" viewBox="0 0 1917 1036"><path d="M1543.53,1000.69 L1543.49,996.62 L1548.51,996.62 L1548.47,1000.69 L1551.54,1001.96 L1554.40,999.06 L1557.94,1002.60 L1555.04,1005.46 L1556.31,1008.53 L1560.38,1008.49 L1560.38,1013.51 L1556.31,1013.47 L1555.04,1016.54 L1557.94,1019.40 L1554.40,1022.94 L1551.54,1020.04 L1548.47,1021.31 L1548.51,1025.38 L1543.49,1025.38 L1543.53,1021.31 L1540.46,1020.04 L1537.60,1022.94 L1534.06,1019.40 L1536.96,1016.54 L1535.69,1013.47 L1531.62,1013.51 L1531.62,1008.49 L1535.69,1008.53 L1536.96,1005.46 L1534.06,1002.60 L1537.60,999.06 L1540.46,1001.96 Z M1541.10,1011.00 a4.9,4.9 0 1 0 9.8,0 a4.9,4.9 0 1 0 -9.8,0 Z" fill="#6e6e6e" fill-rule="evenodd" stroke="#6e6e6e" stroke-width="0.9" stroke-linejoin="round"/></svg>
<div class="bar" id="rscroll"></div>
<div class="abs" style="left:1833px;top:303px;width:11px;height:578.5px;background:#8a8a8a"></div>
<div class="bar" id="rail"></div>
<div class="abs" style="left:1852px;top:403px;width:65px;height:69px;background:#d9318f"></div>
<svg class="i" style="left:0;top:0" width="1917" height="1036" viewBox="0 0 1917 1036"><path d="M1874.300,282.600 H1889.500 L1896.300,289.400 V309 a2.500,2.500 0 0 1 -2.500,2.500 H1874.300 a2.500,2.500 0 0 1 -2.500,-2.500 V285.100 a2.500,2.500 0 0 1 2.500,-2.500 Z" fill="#f9dfe1" stroke="#e34850" stroke-width="2.600" stroke-linejoin="round"/><path transform="translate(1876.5 291) scale(1.25)" d="M0.500,9 C3,7.500 4.800,4 5,0.800 C5,0 4,0 4.100,0.900 C4.500,4 6.500,6.300 9.300,6.500 C10.200,6.500 10.100,5.600 9.200,5.600 C6,5.700 2.500,7 0.500,9 Z" fill="none" stroke="#e34850" stroke-width="0.96" stroke-linejoin="round"/><circle cx="1894.900" cy="308" r="10.600" fill="#fafafa"/><circle cx="1894.900" cy="308" r="8.600" fill="#e34850"/><path d="M1890,308 H1899.800 M1894.900,303.100 V312.900" stroke="#fff" stroke-width="2.800" fill="none"/><path d="M1886.800,350.300 H1897.500 L1904,356.800 V373.600 H1886.800 Z" fill="#6464ea"/><path d="M1897.200,349.500 L1904.500,356.800 V349.500 Z" fill="#fafafa"/><path d="M1898.800,350.300 L1904,355.500 V350.300 Z" fill="#6464ea"/><path d="M1871.500,351.700 H1882.500 a2.200,2.200 0 0 1 2.200,2.200 V370 a2.200,2.200 0 0 1 -2.200,2.200 H1871.500 a2.200,2.200 0 0 1 -2.200,-2.200 V353.900 a2.200,2.200 0 0 1 2.200,-2.200 Z" fill="#fafafa" stroke="#6464ea" stroke-width="2.800"/><path transform="translate(1872.5 357.5) scale(0.95)" d="M0.500,9 C3,7.500 4.800,4 5,0.800 C5,0 4,0 4.100,0.900 C4.500,4 6.500,6.300 9.300,6.500 C10.200,6.500 10.100,5.600 9.200,5.600 C6,5.700 2.500,7 0.500,9 Z" fill="none" stroke="#6464ea" stroke-width="1.15789" stroke-linejoin="round"/><path d="M1880.700,365.500 H1889.800 V376.500 H1895 L1885.200,386.800 L1875.400,376.500 H1880.700 Z" fill="#fafafa"/><path d="M1883.100,367 H1887.400 V377.300 H1893.300 L1885.200,385.500 L1876.600,377.300 H1883.100 Z" fill="#6464ea"/><rect x="1871.200" y="422.700" width="29.800" height="10.600" rx="1" fill="none" stroke="#fff" stroke-width="2.800"/><rect x="1871.200" y="440.800" width="12.600" height="10.600" rx="1" fill="none" stroke="#fff" stroke-width="2.800"/><path d="M1890.800,441.400 H1902.400 M1890.800,445.600 H1902.400 M1890.800,449.800 H1902.400" stroke="#fff" stroke-width="1.600" fill="none"/><path d="M1874.300,490.100 H1889.500 L1896.300,496.900 V516.500 a2.500,2.500 0 0 1 -2.500,2.500 H1874.300 a2.500,2.500 0 0 1 -2.500,-2.500 V492.600 a2.500,2.500 0 0 1 2.500,-2.500 Z" fill="#cfe6e7" stroke="#1f999e" stroke-width="2.600" stroke-linejoin="round"/><path transform="translate(1876.5 498.5) scale(1.25)" d="M0.500,9 C3,7.500 4.800,4 5,0.800 C5,0 4,0 4.100,0.900 C4.500,4 6.500,6.300 9.300,6.500 C10.200,6.500 10.100,5.600 9.200,5.600 C6,5.700 2.500,7 0.500,9 Z" fill="none" stroke="#1f999e" stroke-width="0.96" stroke-linejoin="round"/><circle cx="1894.900" cy="515.500" r="10.600" fill="#fafafa"/><circle cx="1894.900" cy="515.500" r="8.600" fill="#1f999e"/><path d="M1889.800,513.800 H1895 V510.300 L1900.300,515.500 L1895,520.700 V517.200 H1889.800 Z" fill="#fff"/><rect x="1889.300" y="561.400" width="12" height="26.700" rx="1.200" fill="#e3f4d9" stroke="#77cf47" stroke-width="2.800"/><rect x="1872.300" y="574.900" width="12.200" height="13.200" fill="none" stroke="#77cf47" stroke-width="2.700" stroke-dasharray="3 2.300"/><path d="M1884.500,561.800 L1877.500,567" stroke="#77cf47" stroke-width="2.800" stroke-linecap="round" fill="none"/><path d="M1872.800,561 V569.600 H1882.200 Z" fill="#77cf47" stroke="#77cf47" stroke-width="0.800" stroke-linejoin="round"/><path d="M1873.300,628 H1884.500 L1893.200,636.700 V653.300 a2,2 0 0 1 -2,2 H1873.300 a2,2 0 0 1 -2,-2 V630 a2,2 0 0 1 2,-2 Z" fill="#f4e8b8" stroke="#e1b517" stroke-width="2.800" stroke-linejoin="round"/><path d="M1884.200,628.500 V637 H1892.800" fill="#fafafa" stroke="#e1b517" stroke-width="2.600" stroke-linejoin="round"/><path d="M1885,642.800 H1903.800 V657.800 H1892.500 L1889.500,662.500 V657.800 H1885 Z" fill="#fafafa"/><path d="M1887,644.200 H1901.700 a1,1 0 0 1 1,1 V655.500 a1,1 0 0 1 -1,1 H1893 L1890.300,660.800 V656.500 H1887 a1,1 0 0 1 -1,-1 V645.200 a1,1 0 0 1 1,-1 Z" fill="#e1b517"/><path d="M1889.500,648.400 H1899.500 M1889.500,652.200 H1899.500" stroke="#f7ecc0" stroke-width="1.500" fill="none"/><path d="M1873,698 H1898.800 a2,2 0 0 1 2,2 V719.400 a2,2 0 0 1 -2,2 H1888.200 L1880,729.600 V721.400 H1873 a2,2 0 0 1 -2,-2 V700 a2,2 0 0 1 2,-2 Z" fill="#dbb027"/><path d="M1877.300,707.500 H1895 M1877.300,712.900 H1892" stroke="#fff" stroke-width="2.500" fill="none"/><path d="M1873.500,785.500 L1889.800,768.300 a3,3 0 0 1 4.300,-0.100 L1897.600,771.500 a3,3 0 0 1 0.100,4.300 L1881.500,793 L1870,796.300 Z" fill="#e6dafa" stroke="#9357e6" stroke-width="2.800" stroke-linejoin="round"/><path d="M1878.300,790.500 L1895.800,772.200" stroke="#9357e6" stroke-width="2.600" fill="none"/><path d="M1870,796.300 H1884 c1.500,-2 3,-5.500 4.300,-5.500 c1.600,0 0.300,5.500 1.800,5.500 c1.400,0 2.200,-4.500 3.600,-4.500 c1.300,0 0.300,4.500 1.700,4.500 c1.300,0 1.700,-3.500 2.900,-3.500 c1.100,0 0.200,3.600 3.200,3.300" fill="none" stroke="#9357e6" stroke-width="2.500" stroke-linecap="round" stroke-linejoin="round"/><path d="M1877.300,848.500 V837.300 a1.600,1.600 0 0 1 1.600,-1.600 H1889 L1895.800,842.500 V848.500 Z" fill="#d5eeda" stroke="#3eb44f" stroke-width="2.800" stroke-linejoin="round"/><path d="M1886.800,836 V844.300 H1895.300" fill="none" stroke="#3eb44f" stroke-width="2.600"/><path d="M1872.200,847.200 a2.800,2.800 0 0 1 2.800,2.800 V850.800 H1896.500 V850 a2.800,2.800 0 0 1 5.600,0 V855.500 a3,3 0 0 1 -3,3 H1872.400 a3,3 0 0 1 -3,-3 V850 a2.800,2.800 0 0 1 2.800,-2.800 Z" fill="#3eb44f"/><path d="M1877,859 V867 H1895.200 V859" fill="none" stroke="#3eb44f" stroke-width="2.800" stroke-dasharray="2.600 1.700"/><path d="M1899.500,834.800 L1900.500,837.800 L1903.500,838.800 L1900.500,839.800 L1899.500,842.800 L1898.500,839.800 L1895.500,838.800 L1898.500,837.800 Z M1894.300,832.500 L1894.900,834.200 L1896.600,834.800 L1894.900,835.400 L1894.300,837.100 L1893.700,835.400 L1892,834.800 L1893.700,834.200 Z M1871.400,837 L1872,838.800 L1873.800,839.400 L1872,840 L1871.400,841.800 L1870.800,840 L1869,839.400 L1870.800,838.800 Z" fill="#3eb44f"/><path d="M1886,905.500 L1875,909.800 V922 c0,6.500 4.200,11 11,14 Z" fill="#dedef9"/><path d="M1886,905.500 C1882.500,907.800 1878.500,909.200 1874,909.800 V921.500 C1874,928.500 1878.500,933.300 1886,936 C1893.500,933.300 1898,928.500 1898,921.500 V909.800 C1893.500,909.200 1889.500,907.800 1886,905.500 Z" fill="none" stroke="#5b5bec" stroke-width="2.800" stroke-linejoin="round"/><path d="M1875,996.300 L1887.800,983.500" stroke="#6a6a6a" stroke-width="6.400" stroke-linecap="round" fill="none"/><circle cx="1890.800" cy="980.300" r="6.900" fill="#6a6a6a"/><path d="M1891.800,979.300 L1895.200,972.200 L1900.800,977.500 Z" fill="#fafafa"/><circle cx="1893" cy="978" r="2.700" fill="#fafafa"/><circle cx="1874.700" cy="996.500" r="1.500" fill="#fafafa"/><circle cx="1895" cy="998" r="10.600" fill="#fafafa"/><circle cx="1895" cy="998" r="8.900" fill="#6a6a6a"/><path d="M1890,998 H1900 M1895,993 V1003" stroke="#fafafa" stroke-width="2.900" fill="none"/></svg>
</body></html>
